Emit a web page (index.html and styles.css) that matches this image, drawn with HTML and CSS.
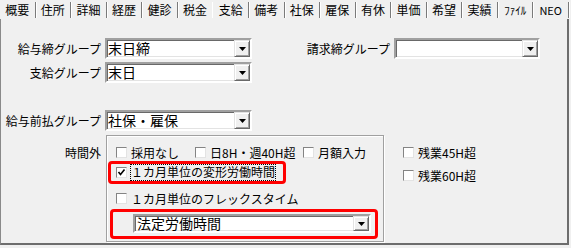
FILE: index.html
```html
<!DOCTYPE html>
<html lang="ja">
<head>
<meta charset="utf-8">
<title>支給</title>
<link rel="stylesheet" href="styles.css">
</head>
<body>
<div class="window">
  <div class="tabs">
    <div class="tab">概要</div>
    <div class="tab">住所</div>
    <div class="tab">詳細</div>
    <div class="tab">経歴</div>
    <div class="tab">健診</div>
    <div class="tab before-active">税金</div>
    <div class="tab active">支給</div>
    <div class="tab">備考</div>
    <div class="tab">社保</div>
    <div class="tab">雇保</div>
    <div class="tab">有休</div>
    <div class="tab">単価</div>
    <div class="tab">希望</div>
    <div class="tab">実績</div>
    <div class="tab small">ﾌｧｲﾙ</div>
    <div class="tab small">NEO</div>
  </div>
  <div class="panel">
    <div class="row">
      <div class="lbl">給与締グループ</div>
      <div class="combo w147"><span class="val">末日締</span><span class="btn"><svg width="7" height="4" viewBox="0 0 7 4"><polygon points="0,0 7,0 3.5,4" fill="#000"/></svg></span></div>
      <div class="lbl lbl-r">請求締グループ</div>
      <div class="combo w146"><span class="val"></span><span class="btn"><svg width="7" height="4" viewBox="0 0 7 4"><polygon points="0,0 7,0 3.5,4" fill="#000"/></svg></span></div>
    </div>
    <div class="row">
      <div class="lbl">支給グループ</div>
      <div class="combo w147"><span class="val">末日</span><span class="btn"><svg width="7" height="4" viewBox="0 0 7 4"><polygon points="0,0 7,0 3.5,4" fill="#000"/></svg></span></div>
    </div>
    <div class="row r3">
      <div class="lbl">給与前払グループ</div>
      <div class="combo w147"><span class="val">社保・雇保</span><span class="btn"><svg width="7" height="4" viewBox="0 0 7 4"><polygon points="0,0 7,0 3.5,4" fill="#000"/></svg></span></div>
    </div>
    <div class="overtime">
      <div class="lbl ot-lbl">時間外</div>
      <div class="group">
        <div class="g-row">
          <div class="chk c1"><span class="box"></span><span>採用なし</span></div>
          <div class="chk c2"><span class="box"></span><span>日8H・週40H超</span></div>
          <div class="chk"><span class="box"></span><span>月額入力</span></div>
        </div>
        <div class="hl hl1">
          <span class="box"><svg width="9" height="9" viewBox="0 0 9 9"><polyline points="1.5,4 3.5,6.5 7.5,1.5" fill="none" stroke="#000" stroke-width="1.6"/></svg></span>
          <span class="focus">１カ月単位の変形労働時間</span>
        </div>
        <div class="g-row g3">
          <div class="chk"><span class="box"></span><span>１カ月単位のフレックスタイム</span></div>
        </div>
        <div class="hl hl2">
          <div class="combo big"><span class="val">法定労働時間</span><span class="btn"><svg width="7" height="4" viewBox="0 0 7 4"><polygon points="0,0 7,0 3.5,4" fill="#000"/></svg></span></div>
        </div>
      </div>
      <div class="side">
        <div class="chk"><span class="box"></span><span>残業45H超</span></div>
        <div class="chk"><span class="box"></span><span>残業60H超</span></div>
      </div>
    </div>
  </div>
</div>
</body>
</html>
```
FILE: styles.css
```css
body {
  margin: 0;
  background: #f0f0f0;
  font-family: "Noto Sans CJK JP", sans-serif;
  font-size: 12px;
  color: #000;
}
.window {
  width: 569px;
}
.tabs {
  display: flex;
  height: 19px;
}
.tab {
  flex: 1;
  margin: 2px 0 1px;
  height: 16px;
  line-height: 16px;
  text-align: center;
  border-right: 1px solid #7a7a7a;
  box-shadow: 1px 0 0 #fff;
  white-space: nowrap;
}
.tab.small {
  font-size: 11px;
}
.tab.before-active {
  border-right-color: #fff;
  box-shadow: none;
}
.panel {
  border-left: 1px solid #8a8a8a;
  border-right: 2px solid #6d6d6d;
  border-bottom: 2px solid #6d6d6d;
  padding: 19px 0 1px;
}
.row {
  display: flex;
  align-items: center;
  height: 21px;
}
.row + .row {
  margin-top: 3px;
}
.row.r3 {
  margin-top: 27px;
}
.lbl {
  width: 104px;
  padding-right: 4px;
  box-sizing: border-box;
  text-align: right;
  white-space: nowrap;
  flex: none;
}
.lbl-r {
  width: 142px;
}
.combo {
  display: flex;
  height: 21px;
  box-sizing: border-box;
  background: #fff;
  border: 2px solid;
  border-color: #a0a0a0 #fff #fff #a0a0a0;
  box-shadow: inset 1px 1px 0 #696969, inset -1px -1px 0 #e3e3e3;
  font-size: 14px;
  flex: none;
}
.w147 { width: 147px; }
.w146 { width: 146px; }
.combo .val {
  flex: 1;
  padding-left: 1px;
  line-height: 17px;
  white-space: nowrap;
}
.combo .btn {
  width: 16px;
  box-sizing: border-box;
  border: 1px solid;
  border-color: #e3e3e3 #696969 #696969 #e3e3e3;
  box-shadow: inset 1px 1px 0 #fff, inset -1px -1px 0 #a0a0a0;
  background: #f0f0f0;
  display: flex;
  align-items: center;
  justify-content: center;
}
.combo .btn svg {
  display: block;
}
.overtime {
  display: flex;
  align-items: flex-start;
  margin-top: 4px;
}
.ot-lbl {
  margin-top: 10px;
  line-height: 16px;
}
.group {
  margin-left: 1px;
  width: 278px;
  box-sizing: border-box;
  border: 1px solid #a0a0a0;
  box-shadow: inset 1px 1px 0 #fff, 1px 1px 0 #fff;
  padding: 8px 0 2px;
  flex: none;
}
.g-row {
  display: flex;
  align-items: center;
  height: 16px;
  padding-left: 9px;
}
.g3 {
  margin-top: 6px;
}
.chk {
  display: flex;
  align-items: center;
  height: 16px;
  white-space: nowrap;
}
.c1 { width: 79px; }
.c2 { width: 108px; }
.box {
  width: 11px;
  height: 11px;
  box-sizing: border-box;
  background: #fff;
  border: 1px solid;
  border-color: #848484 #e3e3e3 #e3e3e3 #848484;
  margin-right: 4px;
  flex: none;
  display: flex;
  align-items: center;
  justify-content: center;
}
.box svg {
  display: block;
}
.hl {
  border: 3px solid #ff0000;
  border-radius: 4px;
  box-sizing: border-box;
}
.hl1 {
  margin: 1px 0 0 1px;
  width: 178px;
  height: 23px;
  display: flex;
  align-items: center;
  padding-left: 5px;
}
.hl1 .box {
  margin-right: 3px;
}
.focus {
  border: 1px dotted #000;
  line-height: 14px;
  padding: 0 0 1px;
  white-space: nowrap;
}
.hl2 {
  margin: 3px 0 0 3px;
  width: 268px;
  height: 30px;
  padding: 2px 0 0 20px;
}
.combo.big {
  width: 238px;
  height: 19px;
}
.combo.big .val {
  line-height: 15px;
  padding-left: 2px;
}
.side {
  margin-left: 19px;
  padding-top: 9px;
}
.side .chk + .chk {
  margin-top: 7px;
}
```
